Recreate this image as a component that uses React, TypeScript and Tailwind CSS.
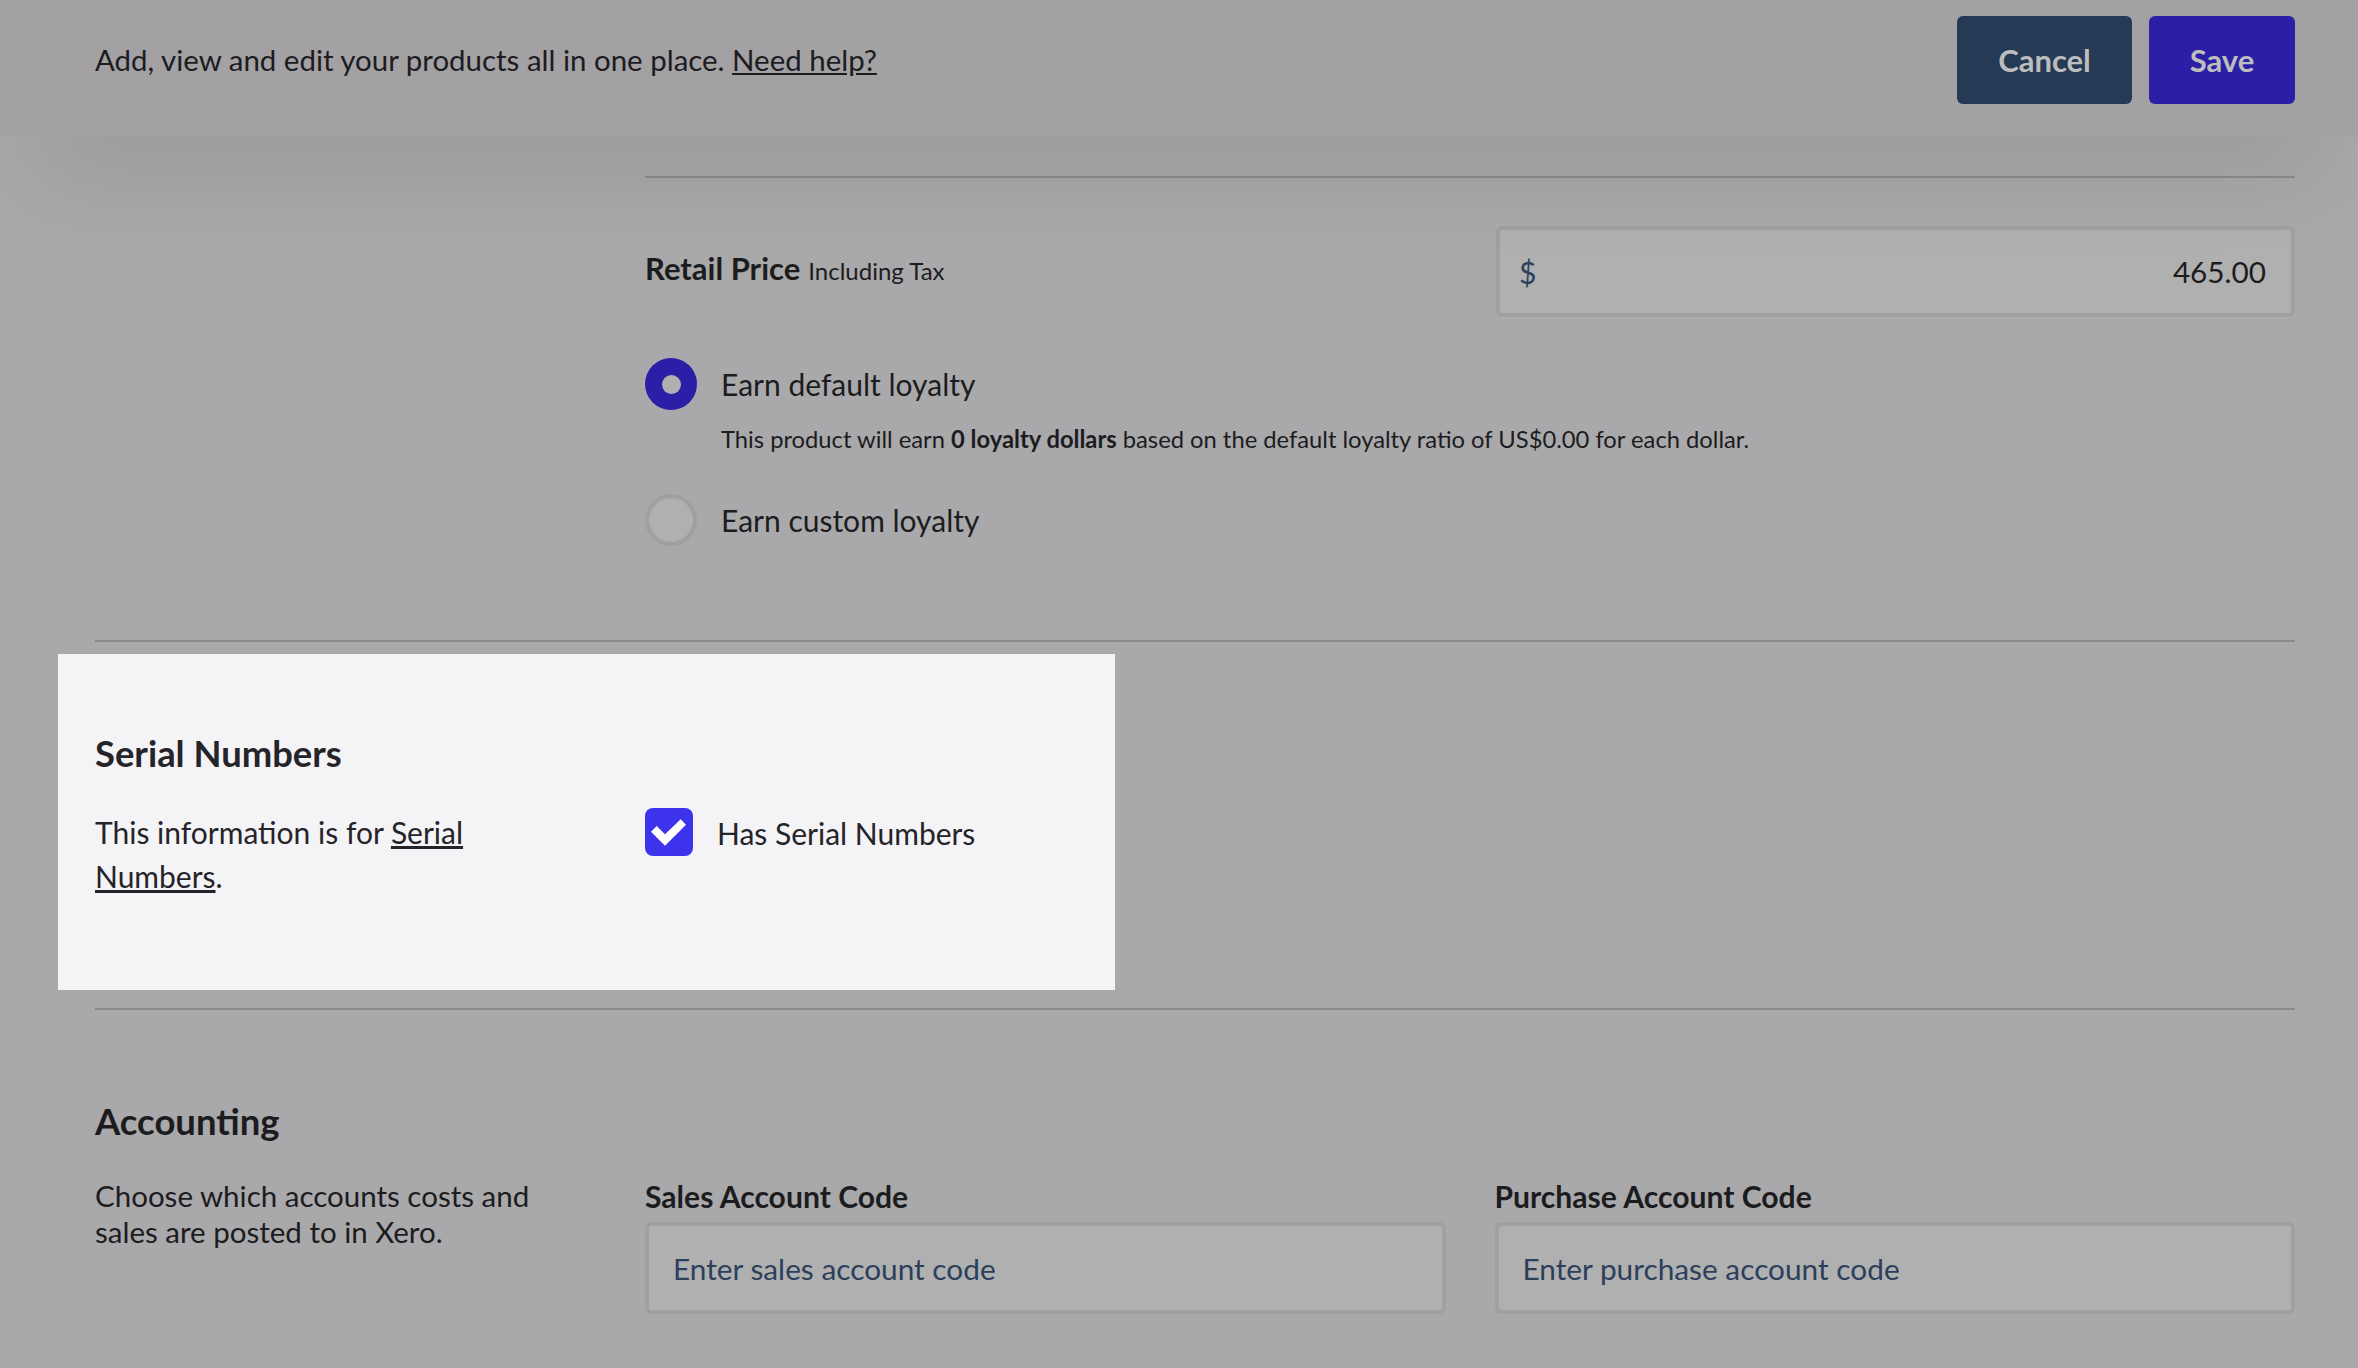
function CodeField({ label, placeholder }: { label: string; placeholder: string }) {
  return (
    <div className="flex-1">
      <label className="block text-[30.1px] leading-[36px] font-bold text-[#1c1c1f]">{label}</label>
      <input
        placeholder={placeholder}
        className="mt-[8px] block h-[92px] w-full rounded-[6px] border-[4px] border-[#a09fa1] bg-[#b0b0b0] pl-[24px] text-[29.8px] text-[#2c405c] outline-none placeholder:text-[#2c405c] placeholder:opacity-100"
      />
    </div>
  )
}

export default function App() {
  return (
    <div className="h-[1368px] w-[2358px] overflow-hidden bg-[#a9a8aa] font-['Lato',sans-serif] text-[#1c1c1f]">
      <header className="relative z-10 flex h-[136px] items-start justify-between bg-[#a3a1a4] pl-[95px] pr-[63px] pt-[16px] shadow-[0_60px_100px_-40px_rgba(0,0,0,0.16)]">
        <p className="mt-[24px] text-[29.45px] leading-[40px]">
          Add, view and edit your products all in one place. <a className="underline">Need help?</a>
        </p>
        <div className="flex gap-[17px]">
          <button className="h-[88px] w-[175px] rounded-[6px] bg-[#253a55] text-[31px] font-bold text-[#bdbdbd]">Cancel</button>
          <button className="h-[88px] w-[146px] rounded-[6px] bg-[#2a1fa6] text-[31px] font-bold text-[#bdbdbd]">Save</button>
        </div>
      </header>

      <main className="pl-[95px] pr-[63px]">
        <div className="mt-[40px] ml-[550px] border-t-2 border-[#8c8c8e] pt-[48px]">
          <div className="flex items-center justify-between">
            <div className="flex items-baseline gap-[8px] pb-[6px]">
              <span className="text-[31px] font-bold">Retail Price</span>
              <span className="text-[24px]">Including Tax</span>
            </div>
            <div className="flex h-[91px] w-[799px] items-center justify-between rounded-[6px] border-[4px] border-[#a09fa1] bg-[#b0b0b0] pl-[19px] pr-[25px] pt-[2px]">
              <span className="text-[30px] text-[#2c405c]">$</span>
              <input defaultValue="465.00" className="w-[200px] bg-transparent text-right text-[29.7px] text-[#1c1c1f] outline-none" />
            </div>
          </div>

          <div className="mt-[41px] flex items-center gap-[24px]">
            <div className="flex h-[52px] w-[52px] items-center justify-center rounded-full bg-[#2a1fa6]">
              <div className="h-[19px] w-[19px] rounded-full bg-[#b0b0b0]" />
            </div>
            <span className="pt-[1px] text-[30px]">Earn default loyalty</span>
          </div>
          <p className="mt-[11px] ml-[76px] text-[23.75px] leading-[36px]">
            This product will earn <b>0 loyalty dollars</b> based on the default loyalty ratio of US$0.00 for each dollar.
          </p>
          <div className="mt-[37px] flex items-center gap-[24px]">
            <div className="h-[52px] w-[52px] rounded-full border-[4px] border-[#a09fa1] bg-[#b0b0b0]" />
            <span className="pt-[1px] text-[30px]">Earn custom loyalty</span>
          </div>
        </div>

        <div className="mt-[94px] border-t-2 border-[#8c8c8e]" />

        {/* highlighted section sits above the dimmed page */}
        <section className="mt-[12px] -ml-[37px] flex h-[336px] w-[1057px] bg-[#f4f3f6] pl-[37px] pt-[77px]">
          <div className="w-[550px]">
            <h2 className="text-[36.4px] leading-[44px] font-bold text-[#252428]">Serial Numbers</h2>
            <p className="mt-[35px] w-[400px] text-[30px] leading-[44px] text-[#252428]">
              This information is for <a className="underline">Serial Numbers</a>.
            </p>
          </div>
          <div className="mt-[77px] flex h-[48px] items-center gap-[24px]">
            <svg viewBox="0 0 48 48" className="h-[48px] w-[48px]">
              <rect width="48" height="48" rx="8" fill="#3d33ec" />
              <polygon points="6,23.7 11.7,18 20,26.3 35.7,11.3 41,16.7 20,37.7" fill="#fff" />
            </svg>
            <span className="pt-[2px] text-[30px] text-[#252428]">Has Serial Numbers</span>
          </div>
        </section>

        <div className="mt-[18px] border-t-2 border-[#8c8c8e]" />

        <section className="mt-[89px]">
          <h2 className="text-[36.5px] leading-[44px] font-bold">Accounting</h2>
          <div className="mt-[35px] flex">
            <p className="w-[550px] pr-[95px] text-[29.5px] leading-[36px]">
              Choose which accounts costs and sales are posted to in Xero.
            </p>
            <div className="flex flex-1 gap-[49px]">
              <CodeField label="Sales Account Code" placeholder="Enter sales account code" />
              <CodeField label="Purchase Account Code" placeholder="Enter purchase account code" />
            </div>
          </div>
        </section>
      </main>
    </div>
  )
}
